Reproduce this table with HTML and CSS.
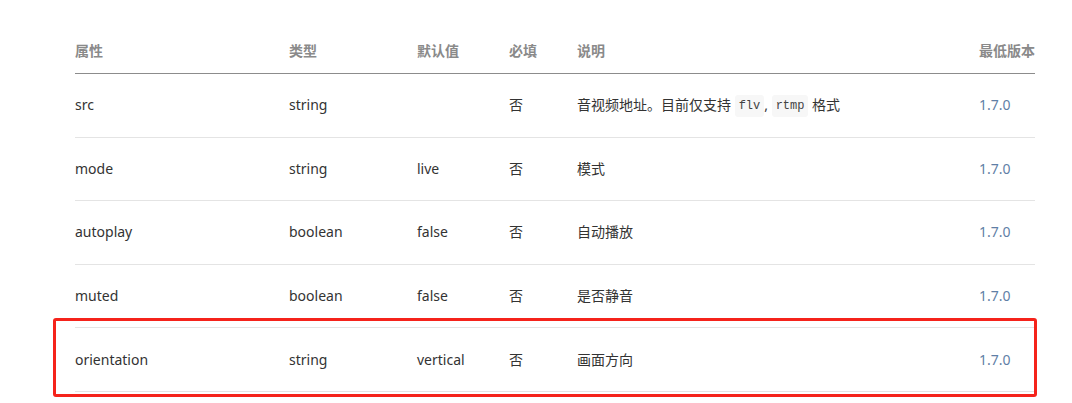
FILE: index.html
```html
<!DOCTYPE html>
<html lang="zh-CN">
<head>
<meta charset="utf-8">
<title>属性</title>
<link rel="stylesheet" href="styles.css">
</head>
<body>
<div class="page">
  <div class="table">
    <div class="row head">
      <div class="cell">属性</div>
      <div class="cell">类型</div>
      <div class="cell">默认值</div>
      <div class="cell">必填</div>
      <div class="cell">说明</div>
      <div class="cell">最低版本</div>
    </div>
    <div class="row">
      <div class="cell">src</div>
      <div class="cell">string</div>
      <div class="cell"></div>
      <div class="cell">否</div>
      <div class="cell">音视频地址。目前仅支持 <code class="code">flv</code>, <code class="code">rtmp</code> 格式</div>
      <div class="cell ver">1.7.0</div>
    </div>
    <div class="row">
      <div class="cell">mode</div>
      <div class="cell">string</div>
      <div class="cell">live</div>
      <div class="cell">否</div>
      <div class="cell">模式</div>
      <div class="cell ver">1.7.0</div>
    </div>
    <div class="row">
      <div class="cell">autoplay</div>
      <div class="cell">boolean</div>
      <div class="cell">false</div>
      <div class="cell">否</div>
      <div class="cell">自动播放</div>
      <div class="cell ver">1.7.0</div>
    </div>
    <div class="row">
      <div class="cell">muted</div>
      <div class="cell">boolean</div>
      <div class="cell">false</div>
      <div class="cell">否</div>
      <div class="cell">是否静音</div>
      <div class="cell ver">1.7.0</div>
    </div>
    <div class="row marked">
      <div class="cell">orientation</div>
      <div class="cell">string</div>
      <div class="cell">vertical</div>
      <div class="cell">否</div>
      <div class="cell">画面方向</div>
      <div class="cell ver">1.7.0</div>
      <div class="highlight"></div>
    </div>
  </div>
</div>
</body>
</html>
```

FILE: styles.css
```css
html, body {
  margin: 0;
  padding: 0;
  background: #ffffff;
}

body {
  font-family: "Noto Sans", "Noto Sans CJK SC", sans-serif;
  font-size: 14px;
  color: #333333;
}

.page {
  padding: 28px 0 11px 75px;
  min-height: 403px;
  box-sizing: border-box;
}

.table {
  width: 960px;
}

.row {
  display: grid;
  grid-template-columns: 214px 128px 92px 68px 402px 56px;
  align-items: center;
  height: 63.6px;
  box-sizing: border-box;
  border-bottom: 1px solid #e4e4e4;
  line-height: 22px;
}

.row.head {
  height: auto;
  padding: 12px 0 11px;
  border-bottom: 1px solid #8c8c8c;
  font-weight: bold;
  color: #8a8a8a;
}

.cell {
  white-space: nowrap;
}

.ver {
  color: #5f7fa6;
}

.code {
  display: inline-block;
  font-family: "Liberation Mono", "DejaVu Sans Mono", monospace;
  font-size: 12px;
  line-height: 22px;
  padding: 0 4px;
  background: #f7f7f7;
  border-radius: 3px;
  color: #444444;
  vertical-align: middle;
}

.marked {
  position: relative;
}

.highlight {
  position: absolute;
  left: -22px;
  right: -2px;
  top: -10px;
  bottom: -6px;
  border: 3px solid #f5231b;
  border-radius: 3px;
  pointer-events: none;
}
```
